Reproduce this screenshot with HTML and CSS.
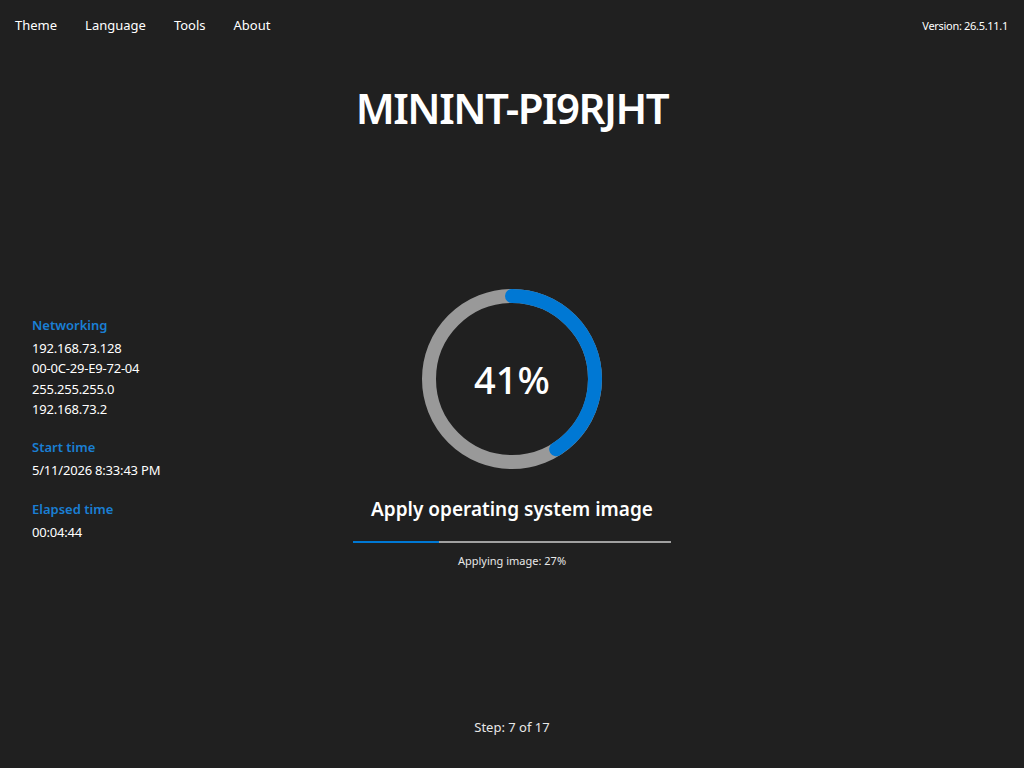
FILE: index.html
```html
<!DOCTYPE html>
<html lang="en">
<head>
    <meta charset="UTF-8">
    <meta name="viewport" content="width=device-width, initial-scale=1.0">
    <title>Deployment Progress</title>
    <link rel="stylesheet" href="styles.css">
</head>
<body>
    <header class="topbar">
        <nav class="menu">
            <span class="menu-item">Theme</span>
            <span class="menu-item">Language</span>
            <span class="menu-item">Tools</span>
            <span class="menu-item">About</span>
        </nav>
        <div class="version">Version: 26.5.11.1</div>
    </header>

    <h1 class="computer-name">MININT-PI9RJHT</h1>

    <main class="main">
        <aside class="info">
            <div class="info-group">
                <div class="info-title">Networking</div>
                <div class="info-line">192.168.73.128</div>
                <div class="info-line">00-0C-29-E9-72-04</div>
                <div class="info-line">255.255.255.0</div>
                <div class="info-line">192.168.73.2</div>
            </div>
            <div class="info-group">
                <div class="info-title">Start time</div>
                <div class="info-line">5/11/2026 8:33:43 PM</div>
            </div>
            <div class="info-group">
                <div class="info-title">Elapsed time</div>
                <div class="info-line">00:04:44</div>
            </div>
        </aside>

        <section class="progress">
            <div class="ring">
                <svg class="ring-svg" width="180" height="180" viewBox="0 0 180 180">
                    <circle class="ring-track" cx="90" cy="90" r="83"></circle>
                    <!-- 41% of 2*pi*83 = 213.8 -->
                    <circle class="ring-value" cx="90" cy="90" r="83" stroke-dasharray="213.8 521.5" transform="rotate(-90 90 90)"></circle>
                </svg>
                <div class="ring-label">41%</div>
            </div>
            <div class="step-name">Apply operating system image</div>
            <div class="bar">
                <div class="bar-fill" style="width: 27%"></div>
            </div>
            <div class="bar-text">Applying image: 27%</div>
        </section>

        <div class="spacer"></div>
    </main>

    <footer class="footer">Step: 7 of 17</footer>
</body>
</html>
```

FILE: styles.css
```css
html, body {
    height: 100%;
}
body {
    margin: 0;
    background: #202020;
    color: #ffffff;
    font-family: 'Noto Sans', 'Open Sans', sans-serif;
    display: flex;
    flex-direction: column;
    overflow: hidden;
}
.topbar {
    height: 50px;
    display: flex;
    align-items: center;
    justify-content: space-between;
    padding: 0 16px 0 15px;
}
.menu {
    display: flex;
    gap: 28px;
}
.menu-item {
    font-size: 13px;
}
.version {
    font-size: 11px;
    letter-spacing: -0.3px;
}
.computer-name {
    margin: 28px 0 0;
    height: 60px;
    line-height: 60px;
    text-align: center;
    font-size: 42px;
    font-weight: 600;
    letter-spacing: -1.5px;
}
.main {
    flex: 1;
    display: grid;
    grid-template-columns: 1fr 320px 1fr;
    align-items: center;
    padding-top: 2px;
}
.info {
    padding-left: 32px;
    display: flex;
    flex-direction: column;
    gap: 18px;
}
.info-title {
    color: #1a7fd4;
    font-size: 13px;
    font-weight: 600;
    line-height: 20px;
    margin-bottom: 3px;
}
.info-line {
    font-size: 13px;
    line-height: 20.3px;
    letter-spacing: -0.2px;
}
.progress {
    display: flex;
    flex-direction: column;
    align-items: center;
}
.ring {
    position: relative;
    width: 180px;
    height: 180px;
}
.ring-svg {
    display: block;
}
.ring-track {
    fill: none;
    stroke: #999999;
    stroke-width: 14;
}
.ring-value {
    fill: none;
    stroke: #0078d4;
    stroke-width: 14;
    stroke-linecap: round;
}
.ring-label {
    position: absolute;
    inset: 0;
    display: flex;
    align-items: center;
    justify-content: center;
    font-size: 38px;
    font-weight: 500;
}
.step-name {
    margin-top: 26px;
    font-size: 19px;
    font-weight: 600;
    line-height: 28px;
}
.bar {
    margin-top: 18px;
    width: 318px;
    height: 2px;
    background: #a0a0a0;
}
.bar-fill {
    height: 100%;
    background: #0078d4;
}
.bar-text {
    margin-top: 10px;
    font-size: 11px;
    line-height: 16px;
    color: #e8e8e8;
}
.footer {
    text-align: center;
    font-size: 13px;
    line-height: 20px;
    padding-bottom: 31px;
    color: #e8e8e8;
}
```
